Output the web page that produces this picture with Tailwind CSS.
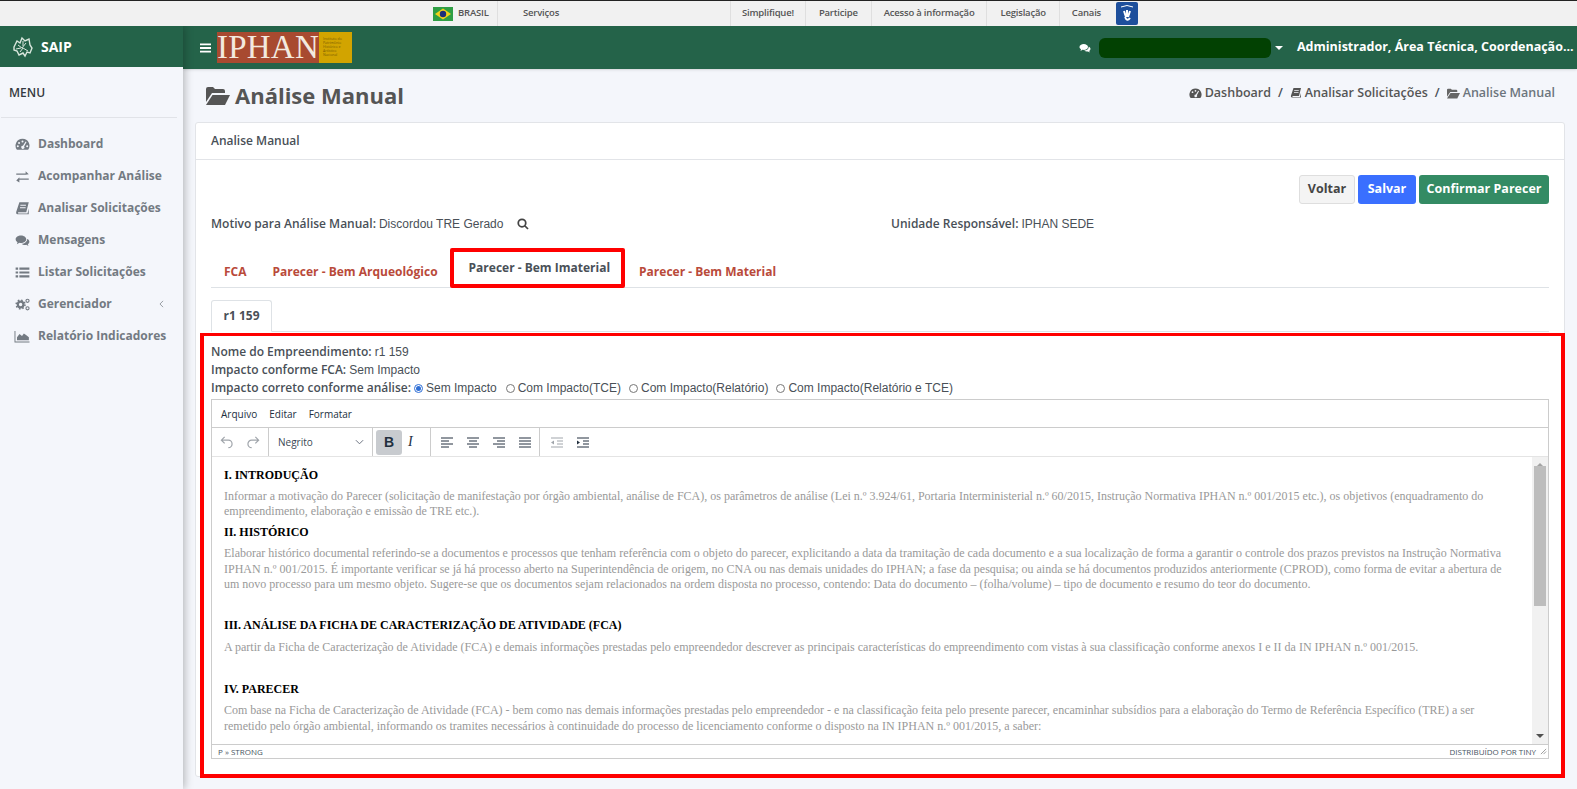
<!DOCTYPE html>
<html lang="pt-BR">

<head>
  <meta charset="UTF-8" />
  <meta name="viewport" content="width=device-width, initial-scale=1.0" />
  <title>SAIP - Análise Manual</title>
  <script src="https://cdn.jsdelivr.net/npm/@tailwindcss/browser@4"></script>
</head>

<body class="w-[1577px] h-[789px] overflow-hidden bg-[#f4f6fb] font-['Open_Sans',sans-serif] text-[#495057]">

  <!-- barra do governo -->
  <div class="h-[26px] bg-[#f1f1f1] border-t border-t-[#222] flex items-stretch text-[9.5px] font-semibold text-[#555] tracking-[-0.2px] relative z-20">
    <div class="w-[433px]"></div>
    <div class="flex items-center w-[65px] border-r border-[#dfdfdf]">
      <svg viewBox="0 0 20 14" class="w-[20px] h-[14px]">
        <rect width="20" height="14" fill="#2f9e44" />
        <polygon points="10,1.5 18,7 10,12.5 2,7" fill="#f2d21b" />
        <circle cx="10" cy="7" r="3.2" fill="#1c2f7a" />
      </svg>
      <span class="ml-[5px]">BRASIL</span>
    </div>
    <div class="flex items-center w-[233px] pl-[25px] border-r border-[#dfdfdf]">Serviços</div>
    <div class="flex items-center px-[11px] border-r border-[#dfdfdf]">Simplifique!</div>
    <div class="flex items-center px-[13px] border-r border-[#dfdfdf]">Participe</div>
    <div class="flex items-center px-[12px] border-r border-[#dfdfdf]">Acesso à informação</div>
    <div class="flex items-center px-[13px] border-r border-[#dfdfdf]">Legislação</div>
    <div class="flex items-center pl-[12px] pr-[15px]">Canais</div>
    <div class="mt-[1px] w-[22px] h-[23px] rounded-[2px] bg-[#1d4f9c] flex items-center justify-center">
      <svg viewBox="0 0 22 23" class="w-[22px] h-[23px]" fill="none" stroke="#fff">
        <path d="M5 5q6-3 12 0" stroke-width="1" />
        <path d="M8 9l2 6M11 8v7M14 9l-2 6M9 15q2 5 5 1" stroke-width="2" />
      </svg>
    </div>
  </div>

  <div class="flex h-[763px]">
    <!-- menu lateral -->
    <aside class="w-[183px] shrink-0 bg-[#f4f6fb] shadow-[2px_0_8px_rgba(0,0,0,0.25)] relative z-10">
      <div class="h-[41px] bg-[#246349] flex items-center pl-[11px] text-white">
        <svg viewBox="0 0 24 24" class="w-[24px] h-[24px]" fill="none" stroke="#d8e6dc" stroke-width="1.4">
          <path d="M3 12l3-6 3 2 2-5 3 3 4-2 1 6 2 3-2 5-3-1-2 4-2-3-4 2-2-4-3-1z" />
          <path d="M7 10l4 3 4-5M9 17l3-4 5 3M12 6v5M5 14l5-1" stroke-width="1" />
        </svg>
        <span class="ml-[6px] text-[14px] font-bold">SAIP</span>
      </div>
      <div class="pl-[9px] pt-[17px] h-[50px] text-[12px] font-semibold text-[#343a40]">MENU</div>
      <div class="mx-[1px] w-[176px] border-t border-[#e1e3e8]"></div>
      <nav class="pt-[10px] text-[12px] font-bold text-[#737a82]">
        <a class="flex items-center h-[32px] pl-[15px]">
          <svg viewBox="0 0 24 24" class="w-[15px] h-[15px] mr-[8px]" fill="#737a82">
            <path fill-rule="evenodd" d="M12 3a11 11 0 0 0-9 17.5h18A11 11 0 0 0 12 3zM12 5.5a1.6 1.6 0 1 1 0 3.2 1.6 1.6 0 0 1 0-3.2zM6.5 8a1.6 1.6 0 1 1 0 3.2 1.6 1.6 0 0 1 0-3.2zM4.5 13a1.6 1.6 0 1 1 0 3.200 1.6 1.6 0 0 1 0-3.2zM19.500 13a1.6 1.6 0 1 1 0 3.200 1.6 1.600 0 0 1 0-3.200zM17 7l1.500 1-4 7a2.500 2.500 0 1 1-1.800-1z" />
          </svg>
          Dashboard
        </a>
        <a class="flex items-center h-[32px] pl-[15px]">
          <svg viewBox="0 0 24 24" class="w-[15px] h-[15px] mr-[8px]" fill="#737a82">
            <path d="M2 7h15V3.500l5 5-5 .5H2zM22 15H7v-2l-5 5.500 5 3V17h15z" />
          </svg>
          Acompanhar Análise
        </a>
        <a class="flex items-center h-[32px] pl-[15px]">
          <svg viewBox="0 0 24 24" class="w-[15px] h-[15px] mr-[8px]" fill="#737a82">
            <path fill-rule="evenodd" d="M7 2h15l-4 16H5.500c-1 0-1 2 0 2H20l2-8v9H4c-2 0-2.500-2-2-4zM8.500 6v1.500h9V6zM8 10v1.500h9V10z" />
          </svg>
          Analisar Solicitações
        </a>
        <a class="flex items-center h-[32px] pl-[15px]">
          <svg viewBox="0 0 24 24" class="w-[15px] h-[15px] mr-[8px]" fill="#737a82">
            <path d="M9.500 4C4.800 4 1 6.700 1 10c0 1.900 1.200 3.500 3 4.600L3 18l4-2.300c.8.200 1.600.3 2.500.3 4.700 0 8.500-2.700 8.500-6s-3.800-6-8.500-6zM19.500 9.500c.2 4-4 7.600-9 7.700 1.300 1.300 3.300 2 5.500 2 .7 0 1.400-.1 2-.3l3.500 2-1-3c1.600-1 2.500-2.300 2.500-3.900 0-1.900-1.100-3.500-3-4.500z" />
          </svg>
          Mensagens
        </a>
        <a class="flex items-center h-[32px] pl-[15px]">
          <svg viewBox="0 0 24 24" class="w-[15px] h-[15px] mr-[8px]" fill="#737a82">
            <path d="M1 4h4v3.500H1zM7 4h16v3.500H7zM1 10.200h4v3.500H1zM7 10.200h16v3.500H7zM1 16.500h4V20H1zM7 16.500h16V20H7z" />
          </svg>
          Listar Solicitações
        </a>
        <a class="flex items-center h-[32px] pl-[15px]">
          <svg viewBox="0 0 24 24" class="w-[15px] h-[15px] mr-[8px]" fill="none" stroke="#737a82">
            <circle cx="9" cy="12" r="4.500" stroke-width="3.500" />
            <circle cx="9" cy="12" r="7" stroke-width="2.500" stroke-dasharray="2.500 3" />
            <circle cx="20" cy="6" r="2.500" stroke-width="1.800" />
            <circle cx="20" cy="18" r="2.500" stroke-width="1.800" />
          </svg>
          Gerenciador
          <svg viewBox="0 0 8 12" class="w-[5px] h-[8px] ml-[47px]" fill="none" stroke="#8b9096" stroke-width="1.400">
            <path d="M6.500 1L1.500 6l5 5" />
          </svg>
        </a>
        <a class="flex items-center h-[32px] pl-[14px]">
          <svg viewBox="0 0 24 24" class="w-[16px] h-[15px] mr-[8px]" fill="#737a82">
            <path d="M0 3h1.500v17H24v1.500H0zM4 18v-5l4-5 4 3 3-4 4 3 4 3v5z" />
          </svg>
          Relatório Indicadores
        </a>
      </nav>
    </aside>

    <div class="flex-1 min-w-0">
      <!-- cabeçalho verde -->
      <header class="h-[43px] bg-[#246349] flex items-center text-white shadow-sm">
        <svg viewBox="0 0 12 10" class="ml-[17px] w-[11px] h-[10px]" fill="#fff">
          <path d="M0 0h12v2H0zM0 4h12v2H0zM0 8h12v2H0z" />
        </svg>
        <div class="ml-[6px] flex h-[31px] -mt-[1px]">
          <div class="w-[102px] bg-[#a84a30] flex items-center justify-center font-['Liberation_Serif',serif] text-[33px] leading-none text-[#f3e9df] tracking-[0.2px]">IPHAN</div>
          <div class="w-[33px] bg-[#d2a400] px-[4px] pt-[5px] text-[3.500px] leading-[4px] text-[#7a5c00]">Instituto do Patrimônio Histórico e Artístico Nacional</div>
        </div>
        <svg viewBox="0 0 24 24" class="ml-[727px] w-[12px] h-[12px]" fill="#fff">
          <path d="M9.500 4C4.800 4 1 6.700 1 10c0 1.900 1.200 3.500 3 4.600L3 18l4-2.300c.8.200 1.600.3 2.500.3 4.700 0 8.500-2.700 8.500-6s-3.800-6-8.500-6zM19.500 9.500c.2 4-4 7.600-9 7.700 1.300 1.300 3.300 2 5.500 2 .7 0 1.400-.1 2-.3l3.500 2-1-3c1.600-1 2.500-2.300 2.500-3.900 0-1.900-1.100-3.500-3-4.500z" />
        </svg>
        <div class="ml-[8px] w-[172px] h-[20px] rounded-[6px] bg-[#024102]"></div>
        <div class="ml-[4px] w-0 h-0 border-x-[4px] border-x-transparent border-t-[4px] border-t-white"></div>
        <div class="ml-[14px] text-[12.500px] font-bold whitespace-nowrap">Administrador, Área Técnica, Coordenação...</div>
      </header>

      <!-- título e breadcrumb -->
      <div class="h-[53px] flex items-center pl-[23px] pr-[22px]">
        <svg viewBox="0 0 24 20" class="w-[24px] h-[20px] text-[#555]" fill="currentColor">
          <path d="M0 3a2 2 0 0 1 2-2h5l2 2h8a2 2 0 0 1 2 2v2H6l-6 9z" />
          <path d="M6.500 9H24l-5 10H0z" />
        </svg>
        <h1 class="ml-[5px] text-[22px] font-bold text-[#555]">Análise Manual</h1>
        <div class="ml-auto -mt-[5px] flex items-center text-[12.500px] font-semibold">
          <svg viewBox="0 0 24 24" class="w-[13px] h-[13px] mr-[3px]" fill="#555">
            <path fill-rule="evenodd" d="M12 3a11 11 0 0 0-9 17.500h18A11 11 0 0 0 12 3zM12 5.500a1.600 1.600 0 1 1 0 3.200 1.600 1.600 0 0 1 0-3.200zM6.500 8a1.600 1.600 0 1 1 0 3.200 1.600 1.600 0 0 1 0-3.200zM17 7l1.500 1-4 7a2.500 2.500 0 1 1-1.800-1z" />
          </svg>
          <span class="text-[#555]">Dashboard</span>
          <span class="mx-[7px]">/</span>
          <svg viewBox="0 0 24 24" class="w-[12px] h-[12px] mr-[3px]" fill="#555">
            <path fill-rule="evenodd" d="M7 2h15l-4 16H5.500c-1 0-1 2 0 2H20l2-8v9H4c-2 0-2.500-2-2-4zM8.500 6v1.500h9V6zM8 10v1.500h9V10z" />
          </svg>
          <span class="text-[#555]">Analisar Solicitações</span>
          <span class="mx-[7px]">/</span>
          <svg viewBox="0 0 24 20" class="w-[13px] h-[11px] mr-[3px]" fill="#666">
            <path d="M0 3a2 2 0 0 1 2-2h5l2 2h8a2 2 0 0 1 2 2v2H6l-6 9z" />
            <path d="M6.500 9H24l-5 10H0z" />
          </svg>
          <span class="text-[#6c757d]">Analise Manual</span>
        </div>
      </div>

      <!-- card -->
      <section class="ml-[12px] w-[1370px] h-[655px] bg-white border border-[#e2e4e8] rounded-[3px]">
        <div class="h-[37px] border-b border-[#e2e4e8] flex items-center pl-[15px] text-[12px] font-semibold text-[#495057]">Analise Manual</div>

        <div class="relative">
          <div class="flex justify-end gap-[3px] pt-[15px] pr-[15px]">
            <button class="h-[29px] w-[56px] rounded-[3px] bg-[#f4f4f4] border border-[#dedede] text-[12.500px] font-bold text-[#444]">Voltar</button>
            <button class="h-[29px] w-[58px] rounded-[3px] bg-[#3a6fff] text-[12.500px] font-bold text-white">Salvar</button>
            <button class="h-[29px] w-[130px] rounded-[3px] bg-[#348b64] text-[12.500px] font-bold text-white">Confirmar Parecer</button>
          </div>

          <div class="flex mt-[11px] pl-[15px] h-[18px] items-center text-[12px]">
            <div class="w-[680px] flex items-center">
              <span class="font-semibold">Motivo para Análise Manual:</span>
              <span class="ml-[3px] font-['Liberation_Sans',sans-serif]">Discordou TRE Gerado</span>
              <svg viewBox="0 0 24 24" class="ml-[14px] w-[12px] h-[12px]" fill="none" stroke="#444" stroke-width="3.500">
                <circle cx="10" cy="10" r="7.500" />
                <path d="M15.500 15.500L22 22" />
              </svg>
            </div>
            <div class="flex items-center">
              <span class="font-semibold">Unidade Responsável:</span>
              <span class="ml-[3px] font-['Liberation_Sans',sans-serif]">IPHAN SEDE</span>
            </div>
          </div>

          <!-- abas -->
          <div class="mx-[15px] mt-[14px] h-[41px] border-b border-[#dee2e6] flex items-end text-[12px] font-bold text-[#b94a3a]">
            <a class="h-[30px] flex items-center px-[13px]">FCA</a>
            <a class="h-[30px] flex items-center px-[13px]">Parecer - Bem Arqueológico</a>
            <a class="h-[40px] flex items-center pl-[15px] pr-[11px] ml-[-1px] border-[4px] border-[#ff0000] rounded-[2px] text-[#495057] relative -mb-[1px]">Parecer - Bem Imaterial</a>
            <a class="h-[30px] flex items-center px-[14px]">Parecer - Bem Material</a>
          </div>

          <div class="mx-[15px] mt-[12px] h-[32px] border-b border-[#dee2e6] flex">
            <a class="w-[61px] h-[32px] border border-[#dee2e6] border-b-white rounded-t-[3px] bg-white flex items-center justify-center text-[12px] font-bold">r1 159</a>
          </div>

          <!-- área destacada -->
          <div class="-ml-[-4px] mr-[-1px] mt-[1px] h-[445px] border-[4px] border-t-[3px] border-[#ff0000] pl-[7px] pr-[12px] pt-[7px] text-[12px] leading-[18px]">
            <div><span class="font-semibold">Nome do Empreendimento:</span> <span class="font-['Liberation_Sans',sans-serif]">r1 159</span></div>
            <div><span class="font-semibold">Impacto conforme FCA:</span> <span class="font-['Liberation_Sans',sans-serif]">Sem Impacto</span></div>
            <div class="flex items-center font-['Liberation_Sans',sans-serif] whitespace-nowrap">
              <span class="font-['Open_Sans',sans-serif] font-semibold">Impacto correto conforme análise:</span>
              <span class="ml-[3px] w-[9px] h-[9px] rounded-full border border-[#2f6fd6] flex items-center justify-center"><span class="w-[5px] h-[5px] rounded-full bg-[#2f6fd6]"></span></span>
              <span class="ml-[3px]">Sem Impacto</span>
              <span class="ml-[9px] w-[9px] h-[9px] rounded-full border border-[#777]"></span>
              <span class="ml-[3px]">Com Impacto(TCE)</span>
              <span class="ml-[8px] w-[9px] h-[9px] rounded-full border border-[#777]"></span>
              <span class="ml-[3px]">Com Impacto(Relatório)</span>
              <span class="ml-[8px] w-[9px] h-[9px] rounded-full border border-[#777]"></span>
              <span class="ml-[3px]">Com Impacto(Relatório e TCE)</span>
            </div>

            <!-- editor -->
            <div class="mt-[2px] h-[360px] border border-[#ccc] flex flex-col">
              <div class="h-[28px] shrink-0 border-b border-[#ccc] flex items-center pl-[9px] gap-[12px] text-[10px] text-[#222f3e]">
                <span>Arquivo</span><span>Editar</span><span>Formatar</span>
              </div>
              <div class="h-[29px] shrink-0 border-b border-[#e4e4e4] flex items-center text-[#222f3e]">
                <div class="w-[57px] h-full border-r border-[#ccc] flex items-center justify-center gap-[14px]">
                  <svg viewBox="0 0 14 14" class="w-[13px] h-[13px]" fill="none" stroke="#a0a5ab" stroke-width="1.300">
                    <path d="M5 1L1.500 4.500 5 8M1.500 4.500H9a4 4 0 0 1 0 8" />
                  </svg>
                  <svg viewBox="0 0 14 14" class="w-[13px] h-[13px]" fill="none" stroke="#a0a5ab" stroke-width="1.300">
                    <path d="M9 1l3.500 3.500L9 8M12.500 4.500H5a4 4 0 0 0 0 8" />
                  </svg>
                </div>
                <div class="w-[104px] h-full border-r border-[#ccc] flex items-center pl-[9px] pr-[8px] text-[10px] text-[#3b4754] justify-between">
                  Negrito
                  <svg viewBox="0 0 10 6" class="w-[9px] h-[6px]" fill="none" stroke="#6b7280" stroke-width="1.100">
                    <path d="M1 1l4 4 4-4" />
                  </svg>
                </div>
                <div class="w-[58px] h-full border-r border-[#ccc] flex items-center pl-[3px] gap-[6px] font-['Liberation_Sans',sans-serif]">
                  <span class="w-[26px] h-[25px] rounded-[3px] bg-[#c8cbcf] flex items-center justify-center text-[14px] font-bold">B</span>
                  <span class="text-[14px] italic font-['Liberation_Serif',serif]">I</span>
                </div>
                <div class="w-[109px] h-full border-r border-[#ccc] flex items-center pl-[10px] gap-[14px]">
                  <svg viewBox="0 0 12 11" class="w-[12px] h-[11px]" stroke="#222f3e"><path d="M0 1h12M0 4h8M0 7h12M0 10h8" /></svg>
                  <svg viewBox="0 0 12 11" class="w-[12px] h-[11px]" stroke="#222f3e"><path d="M0 1h12M2 4h8M0 7h12M2 10h8" /></svg>
                  <svg viewBox="0 0 12 11" class="w-[12px] h-[11px]" stroke="#222f3e"><path d="M0 1h12M4 4h8M0 7h12M4 10h8" /></svg>
                  <svg viewBox="0 0 12 11" class="w-[12px] h-[11px]" stroke="#222f3e"><path d="M0 1h12M0 4h12M0 7h12M0 10h12" /></svg>
                </div>
                <div class="flex items-center pl-[11px] gap-[14px]">
                  <svg viewBox="0 0 12 11" class="w-[12px] h-[11px]" stroke="#a0a5ab" fill="#a0a5ab"><path d="M0 1h12M6 4h6M6 7h6M0 10h12" /><path d="M3 3.500v4L0 5.500z" stroke="none" /></svg>
                  <svg viewBox="0 0 12 11" class="w-[12px] h-[11px]" stroke="#222f3e" fill="#222f3e"><path d="M0 1h12M6 4h6M6 7h6M0 10h12" /><path d="M0 3.500v4l3-2z" stroke="none" /></svg>
                </div>
              </div>

              <div class="flex-1 min-h-0 flex">
                <div class="flex-1 overflow-hidden pl-[12px] pr-[14px] pt-[11px] font-['Liberation_Serif',serif] text-[12px] leading-[15.500px] text-[#999]">
                  <p class="font-bold text-black mb-[5px] mt-0">I. INTRODUÇÃO</p>
                  <p>Informar a motivação do Parecer (solicitação de manifestação por órgão ambiental, análise de FCA), os parâmetros de análise (Lei n.º 3.924/61, Portaria Interministerial n.º 60/2015, Instrução Normativa IPHAN n.º 001/2015 etc.), os objetivos (enquadramento do empreendimento, elaboração e emissão de TRE etc.).</p>
                  <p class="font-bold text-black mt-[5px] mb-[6px]">II. HISTÓRICO</p>
                  <p>Elaborar histórico documental referindo-se a documentos e processos que tenham referência com o objeto do parecer, explicitando a data da tramitação de cada documento e a sua localização de forma a garantir o controle dos prazos previstos na Instrução Normativa IPHAN n.º 001/2015. É importante verificar se já há processo aberto na Superintendência de origem, no CNA ou nas demais unidades do IPHAN; a fase da pesquisa; ou ainda se há documentos produzidos anteriormente (CPROD), como forma de evitar a abertura de um novo processo para um mesmo objeto. Sugere-se que os documentos sejam relacionados na ordem disposta no processo, contendo: Data do documento – (folha/volume) – tipo de documento e resumo do teor do documento.</p>
                  <p class="font-bold text-black mt-[25px] mb-[7px]">III. ANÁLISE DA FICHA DE CARACTERIZAÇÃO DE ATIVIDADE (FCA)</p>
                  <p>A partir da Ficha de Caracterização de Atividade (FCA) e demais informações prestadas pelo empreendedor descrever as principais características do empreendimento com vistas à sua classificação conforme anexos I e II da IN IPHAN n.º 001/2015.</p>
                  <p class="font-bold text-black mt-[26px] mb-[6px]">IV. PARECER</p>
                  <p>Com base na Ficha de Caracterização de Atividade (FCA) - bem como nas demais informações prestadas pelo empreendedor - e na classificação feita pelo presente parecer, encaminhar subsídios para a elaboração do Termo de Referência Específico (TRE) a ser remetido pelo órgão ambiental, informando os tramites necessários à continuidade do processo de licenciamento conforme o disposto na IN IPHAN n.º 001/2015, a saber:</p>
                </div>
                <div class="w-[16px] shrink-0 bg-[#f1f1f1] flex flex-col items-center justify-between py-[6px]">
                  <div class="w-0 h-0 border-x-[4px] border-x-transparent border-b-[4px] border-b-[#a3a3a3]"></div>
                  <div class="w-[12px] h-[140px] -mt-[1px] bg-[#bdbdbd]"></div>
                  <div class="flex-1"></div>
                  <div class="w-0 h-0 border-x-[4px] border-x-transparent border-t-[4px] border-t-[#505050]"></div>
                </div>
              </div>

              <div class="h-[14px] shrink-0 border-t border-[#ccc] flex items-center justify-between pl-[6px] pr-[1px] text-[8px] leading-none text-[#485563]">
                <span>P » STRONG</span>
                <span class="flex items-center gap-[4px]">DISTRIBUÍDO POR TINY
                  <svg viewBox="0 0 8 8" class="w-[7px] h-[7px]" stroke="#777" stroke-width="0.800"><path d="M1 7l6-6M4 7l3-3" /></svg>
                </span>
              </div>
            </div>
          </div>
        </div>
      </section>
    </div>
  </div>
</body>

</html>
